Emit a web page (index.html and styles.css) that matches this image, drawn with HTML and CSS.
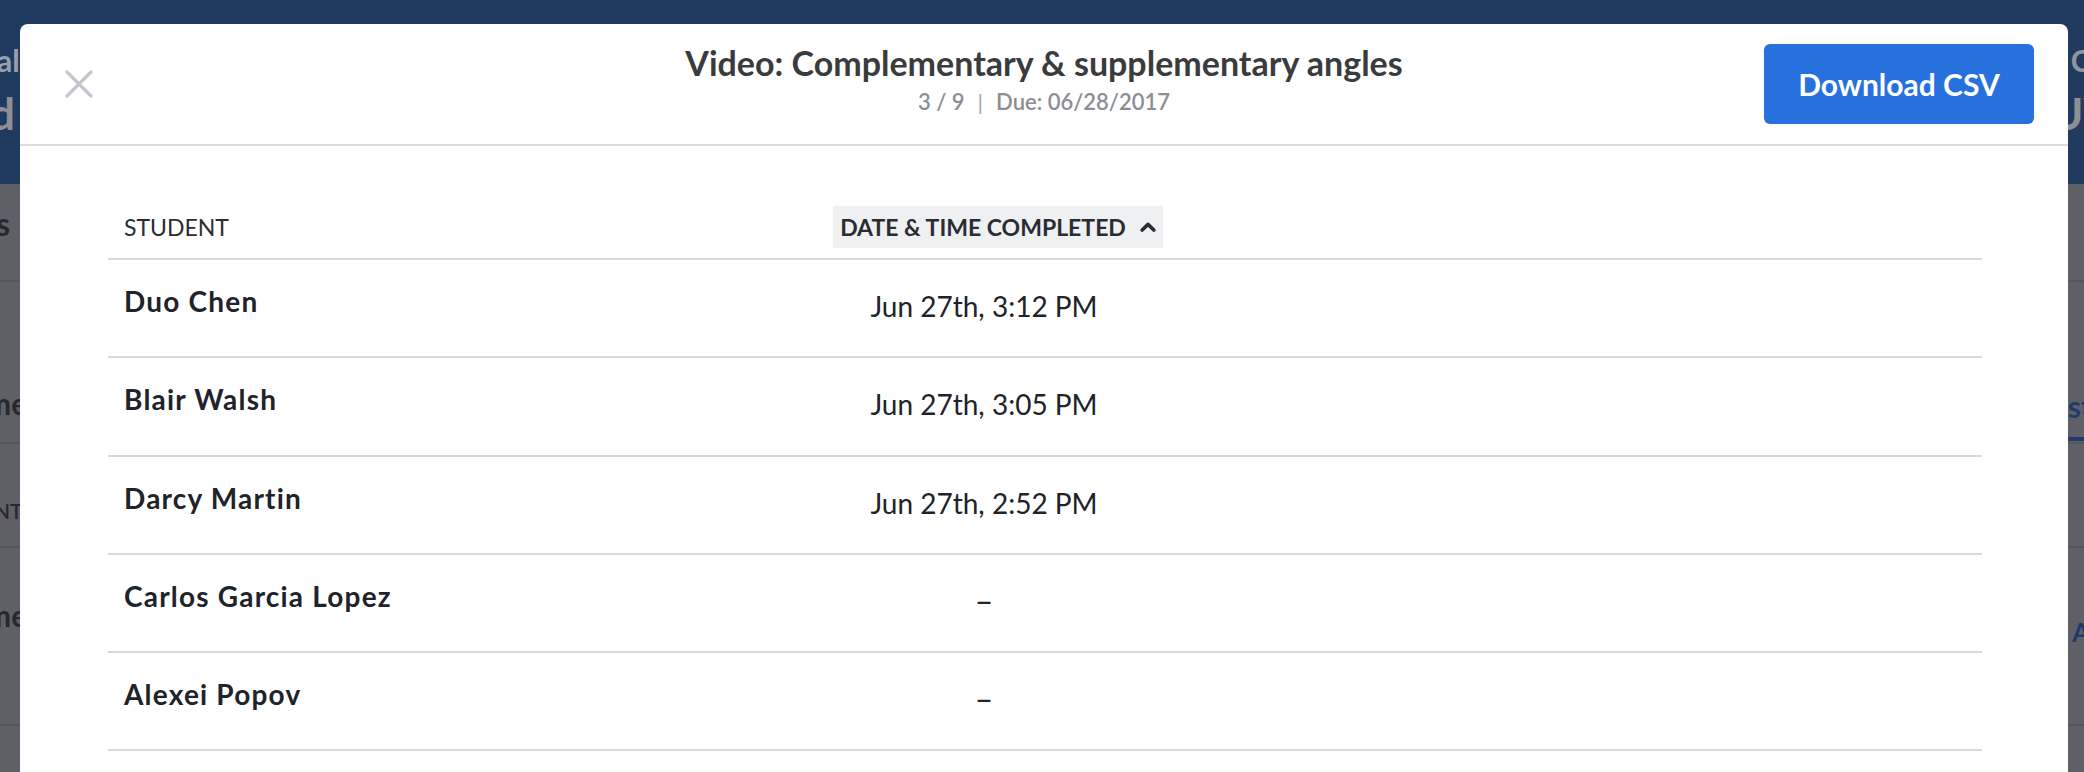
FILE: index.html
```html
<!DOCTYPE html>
<html lang="en">
<head>
<meta charset="utf-8">
<title>Video: Complementary &amp; supplementary angles</title>
<link rel="stylesheet" href="styles.css">
</head>
<body>
  <div class="bg-page">
    <div class="bg-top">
      <div class="bg-top-row">
        <span class="bg-crumb bg-crumb-left">all</span>
        <span class="bg-crumb bg-crumb-right">Cl</span>
      </div>
      <div class="bg-top-row bg-top-row-2">
        <span class="bg-title bg-title-left">d</span>
        <span class="bg-title bg-title-right">UV</span>
      </div>
    </div>
    <div class="bg-row bg-row-1">
      <span class="bg-text bg-s">s</span>
    </div>
    <div class="bg-row bg-row-2">
      <span class="bg-text bg-me1">me</span>
      <span class="bg-tab">st</span>
    </div>
    <div class="bg-row bg-row-3">
      <span class="bg-caps">NT</span>
    </div>
    <div class="bg-row bg-row-4">
      <span class="bg-text bg-me2">me</span>
      <span class="bg-link">A</span>
    </div>
    <div class="bg-row bg-row-5">
      <span class="bg-text bg-m">m</span>
    </div>
  </div>

  <div class="modal" role="dialog" aria-label="Video: Complementary &amp; supplementary angles">
    <header class="modal-header">
      <button class="close" aria-label="Close">
        <svg width="28" height="28" viewBox="0 0 28 28" aria-hidden="true">
          <path d="M2 2 L26 26 M26 2 L2 26" stroke="#c3c6cb" stroke-width="3.2" stroke-linecap="round" fill="none"/>
        </svg>
      </button>
      <div class="title-block">
        <h1 class="title">Video: Complementary &amp; supplementary angles</h1>
        <div class="meta"><span>3 / 9</span><span class="sep">|</span><span>Due: 06/28/2017</span></div>
      </div>
      <div class="actions">
        <button class="download">Download CSV</button>
      </div>
    </header>

    <div class="modal-body">
      <div class="table">
        <div class="thead">
          <div class="th th-student">STUDENT</div>
          <div class="th th-date">
            <span class="sort">DATE &amp; TIME COMPLETED
              <svg class="chev" width="16" height="10" viewBox="0 0 16 10" aria-hidden="true">
                <path d="M2.2 8 L8 2.4 L13.8 8" stroke="#2a2c32" stroke-width="3.6" stroke-linecap="round" stroke-linejoin="round" fill="none"/>
              </svg>
            </span>
          </div>
          <div class="th"></div>
        </div>
        <div class="tr"><div class="td name">Duo Chen</div><div class="td date">Jun 27th, 3:12 PM</div><div class="td"></div></div>
        <div class="tr"><div class="td name">Blair Walsh</div><div class="td date">Jun 27th, 3:05 PM</div><div class="td"></div></div>
        <div class="tr"><div class="td name">Darcy Martin</div><div class="td date">Jun 27th, 2:52 PM</div><div class="td"></div></div>
        <div class="tr"><div class="td name">Carlos Garcia Lopez</div><div class="td date dash">–</div><div class="td"></div></div>
        <div class="tr"><div class="td name">Alexei Popov</div><div class="td date dash">–</div><div class="td"></div></div>
      </div>
    </div>
  </div>
</body>
</html>
```

FILE: styles.css
```css
* { box-sizing: border-box; }

html, body {
  margin: 0;
  padding: 0;
}

body {
  width: 2084px;
  height: 772px;
  overflow: hidden;
  position: relative;
  background: #5f6067;
  font-family: "Lato", "Helvetica Neue", Arial, sans-serif;
  color: #23262c;
}

/* ---------- dimmed page behind the modal ---------- */
.bg-page {
  display: flex;
  flex-direction: column;
  width: 2084px;
}

.bg-top {
  height: 184px;
  background: #213a5f;
  display: flex;
  flex-direction: column;
  padding-top: 42px;
}

.bg-top-row {
  display: flex;
  justify-content: space-between;
  white-space: nowrap;
}

.bg-top-row-2 { margin-top: 9px; }

.bg-crumb {
  font-size: 30px;
  line-height: 36px;
  font-weight: 700;
  color: #98a0ad;
}

.bg-crumb-left { margin-left: -3px; }
.bg-crumb-right { margin-right: -14px; color: #8f959f; }

.bg-title {
  font-size: 44px;
  line-height: 52px;
  font-weight: 700;
  color: #8d8f94;
}

.bg-title-left { margin-left: -10px; }
.bg-title-right { margin-right: -30px; }

.bg-row {
  display: flex;
  justify-content: space-between;
  border-bottom: 2px solid #55565c;
  white-space: nowrap;
}

.bg-row-1 { height: 98px; }
.bg-row-2 { height: 162px; }
.bg-row-3 { height: 104px; }
.bg-row-4 { height: 178px; }
.bg-row-5 { height: 60px; border-bottom: 0; }

.bg-text {
  font-size: 30px;
  line-height: 36px;
  font-weight: 700;
  color: #26282d;
  align-self: flex-end;
}

.bg-s { font-size: 32px; margin-left: -4px; padding-bottom: 38px; }
.bg-me1 { margin-left: -14px; padding-bottom: 21px; }
.bg-me2 { margin-left: -14px; padding-bottom: 91px; }
.bg-m { margin-left: -14px; align-self: flex-start; padding-top: 38px; }

.bg-caps {
  font-size: 21px;
  line-height: 26px;
  font-weight: 600;
  color: #26282d;
  margin-left: -6px;
  align-self: flex-end;
  padding-bottom: 22px;
}

.bg-tab {
  font-size: 30px;
  line-height: 36px;
  font-weight: 700;
  color: #1f3a6b;
  align-self: flex-end;
  margin-right: -8px;
  padding: 0 0 13px 0;
  border-bottom: 4px solid #1f3a6b;
  margin-bottom: 1px;
}

.bg-link {
  font-size: 26px;
  line-height: 32px;
  font-weight: 700;
  color: #1f3a6b;
  align-self: flex-end;
  margin-right: -6px;
  padding-bottom: 76px;
}

/* ---------- modal ---------- */
.modal {
  position: absolute;
  left: 20px;
  top: 24px;
  width: 2048px;
  height: 780px;
  background: #ffffff;
  border-radius: 8px 8px 0 0;
  display: flex;
  flex-direction: column;
}

.modal-header {
  display: grid;
  grid-template-columns: 1fr auto 1fr;
  align-items: center;
  padding: 20px 34px;
  border-bottom: 2px solid #dcdcdc;
  height: 122px;
}

.close {
  justify-self: start;
  margin-left: 11px;
  padding: 0;
  border: 0;
  background: none;
  width: 28px;
  height: 28px;
  display: flex;
  cursor: pointer;
}

.title-block {
  align-self: start;
  margin-top: -1px;
  display: flex;
  flex-direction: column;
  align-items: center;
  gap: 6px;
}

.title {
  margin: 0;
  font-size: 34px;
  line-height: 40px;
  font-weight: 700;
  color: #3a3b3d;
  white-space: nowrap;
}

.meta {
  display: flex;
  gap: 13px;
  font-size: 22px;
  line-height: 26px;
  font-weight: 600;
  color: #8b8e94;
}

.meta .sep {
  font-weight: 400;
  color: #a3a6ab;
}

.actions {
  justify-self: end;
  display: flex;
}

.download {
  width: 270px;
  height: 80px;
  border: 0;
  border-radius: 6px;
  background: #2671de;
  color: #ffffff;
  font-family: inherit;
  font-size: 30px;
  font-weight: 700;
  cursor: pointer;
}

.modal-body {
  padding: 60px 86px 0 88px;
}

.table {
  display: flex;
  flex-direction: column;
}

.thead,
.tr {
  display: grid;
  grid-template-columns: 600px 552px 1fr;
}

.thead {
  padding-bottom: 10px;
  border-bottom: 2px solid #d9d9d9;
}

.th {
  font-size: 23px;
  line-height: 42px;
  color: #2a2c32;
}

.th-student {
  padding-left: 16px;
  font-weight: 400;
}

.th-date {
  display: flex;
  justify-content: center;
}

.sort {
  display: inline-flex;
  align-items: center;
  gap: 14px;
  height: 42px;
  padding: 0 7px;
  margin-left: 28px;
  background: #eff0f2;
  font-weight: 700;
  white-space: nowrap;
}

.chev { display: block; }

.tr {
  height: 98.3px;
  border-bottom: 2px solid #d9d9d9;
}

.td {
  font-size: 28px;
  line-height: 34px;
  color: #20232a;
  white-space: nowrap;
}

.name {
  padding: 24px 0 0 16px;
  font-weight: 700;
  letter-spacing: 1.2px;
}

.date {
  padding-top: 29px;
  text-align: center;
  font-weight: 400;
}

.dash {
  font-size: 32px;
}
```
